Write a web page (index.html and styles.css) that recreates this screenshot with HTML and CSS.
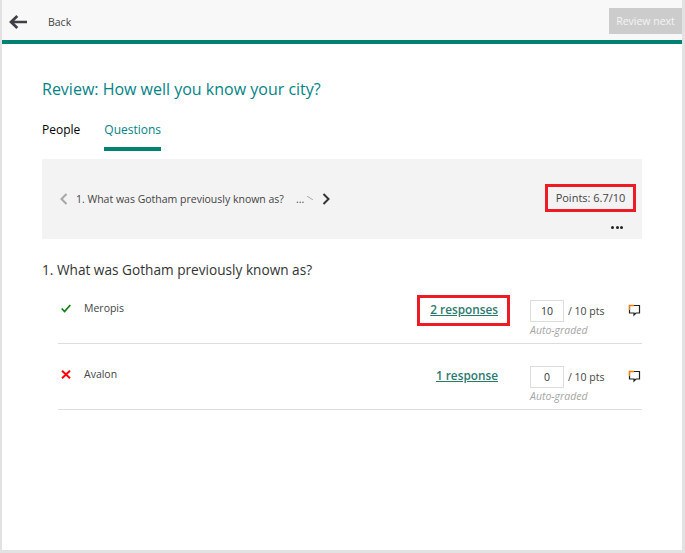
FILE: index.html
```html
<!DOCTYPE html>
<html lang="en">
<head>
<meta charset="utf-8">
<title>Review</title>
<link rel="stylesheet" href="styles.css">
</head>
<body>
<div class="page">
  <header class="topbar">
    <a class="back">
      <svg class="back-icon" viewBox="0 0 18 14" width="18" height="14"><path d="M18 7H2.500M8.300 1 2 7l6.300 6" fill="none" stroke="#3f3f46" stroke-width="2.700"/></svg>
      <span class="back-label">Back</span>
    </a>
    <button class="next">Review next</button>
  </header>
  <main class="content">
    <h1 class="title">Review: How well you know your city?</h1>
    <nav class="tabs">
      <span class="tab">People</span>
      <span class="tab active">Questions</span>
    </nav>
    <section class="panel">
      <div class="panel-row">
        <div class="pager">
          <svg class="chev" viewBox="0 0 9 12" width="9" height="12"><path d="M7.500 1 2.500 6l5 5" fill="none" stroke="#a6a6a6" stroke-width="2"/></svg>
          <span class="pager-text">1. What was Gotham previously known as?</span>
          <span class="pager-more">...</span>
          <svg class="tick" viewBox="0 0 6 4" width="6" height="4"><path d="M0 0 6 4" stroke="#a6a6a6" stroke-width="1"/></svg>
          <svg class="chev" viewBox="0 0 9 12" width="9" height="12"><path d="M1.500 1 6.500 6l-5 5" fill="none" stroke="#333" stroke-width="2"/></svg>
        </div>
        <div class="points">Points: 6.7/10</div>
      </div>
      <div class="dots"><i></i><i></i><i></i></div>
    </section>
    <h2 class="question">1. What was Gotham previously known as?</h2>
    <div class="answers">
      <div class="answer">
        <svg class="mark" viewBox="0 0 10 9" width="10" height="9"><path d="M.7 4.500 3.600 7.500 9.300 1" fill="none" stroke="#107c10" stroke-width="1.700"/></svg>
        <span class="option">Meropis</span>
        <a class="responses boxed">2 responses</a>
        <div class="score">
          <div class="score-line"><span class="score-box">10</span><span class="score-max">/ 10 pts</span></div>
          <div class="graded">Auto-graded</div>
        </div>
        <svg class="comment" viewBox="0 0 13 13" width="13" height="13"><path d="M1.500 1.500h10v7.500H8L6 11V9H1.500z" fill="none" stroke="#222" stroke-width="1.200"/><path d="M1.500 6V1.500H6" fill="none" stroke="#f57c00" stroke-width="1.300"/></svg>
      </div>
      <div class="answer">
        <svg class="mark" viewBox="0 0 10 9" width="10" height="9"><path d="M1 .7 9 8.300M9 .7 1 8.300" fill="none" stroke="#f00" stroke-width="1.900"/></svg>
        <span class="option">Avalon</span>
        <a class="responses">1 response</a>
        <div class="score">
          <div class="score-line"><span class="score-box">0</span><span class="score-max">/ 10 pts</span></div>
          <div class="graded">Auto-graded</div>
        </div>
        <svg class="comment" viewBox="0 0 13 13" width="13" height="13"><path d="M1.500 1.500h10v7.500H8L6 11V9H1.500z" fill="none" stroke="#222" stroke-width="1.200"/><path d="M1.500 6V1.500H6" fill="none" stroke="#f57c00" stroke-width="1.300"/></svg>
      </div>
    </div>
  </main>
</div>
</body>
</html>
```
FILE: styles.css
```css
* { box-sizing: border-box; }
html, body { margin: 0; height: 100%; }
body {
  background: #e2e2e2;
  font-family: "Open Sans", "Liberation Sans", sans-serif;
  color: #333;
  overflow: hidden;
}
.page {
  width: 680px;
  height: 550px;
  margin-left: 2px;
  background: #fff;
}
.topbar {
  height: 44px;
  background: #f8f8f8;
  border-bottom: 4px solid #008272;
  display: flex;
  align-items: flex-start;
  justify-content: space-between;
}
.back { display: flex; align-items: center; height: 40px; padding-left: 7px; padding-top: 3px; }
.back-label { font-size: 10.5px; margin-left: 21px; color: #444; }
.next {
  margin-top: 8px;
  width: 73px;
  height: 26px;
  border: 0;
  padding: 0;
  background: #ccc;
  color: #f4f4f4;
  font: 10.5px "Open Sans", sans-serif;
}
.content { padding: 0 40px; }
.title {
  margin: 33px 0 0;
  height: 25px;
  font-size: 16px;
  line-height: 25px;
  font-weight: 400;
  color: #038387;
}
.tabs { display: flex; gap: 24px; margin-top: 14px; height: 35px; }
.tab { font-size: 12px; line-height: 18px; padding-top: 5px; color: #000; height: 35px; }
.tab.active { color: #038387; border-bottom: 4px solid #008272; }
.panel { margin-top: 8px; height: 80px; background: #f3f3f3; padding: 0 6px 0 17px; position: relative; }
.panel-row { display: flex; justify-content: space-between; align-items: center; height: 79px; }
.pager { display: flex; align-items: center; font-size: 10.5px; color: #444; }
.pager-text { margin-left: 8px; }
.pager-more { margin-left: 12px; }
.tick { margin: -2px 0 0 3px; }
.pager .chev:last-child { margin-left: 9px; }
.points { border: 3px solid #ed1c24; width: 91px; height: 28px; font-size: 11px; line-height: 22px; text-align: center; color: #444; margin-top: -1px; }
.dots { position: absolute; right: 19px; top: 67px; display: flex; gap: 1.500px; }
.dots i { width: 3px; height: 3px; border-radius: 50%; background: #222; }
.question { margin: 24px 0 0; font-size: 13.650px; line-height: 14px; font-weight: 400; color: #333; }
.answers { margin: 1px 0 0 16px; }
.answer { height: 66px; border-bottom: 1px solid #ddd; position: relative; }
.mark { position: absolute; left: 3px; top: 26px; }
.option { position: absolute; left: 26px; top: 22px; font-size: 10.5px; line-height: 16px; color: #444; }
.responses { position: absolute; right: 144px; top: 22px; font-size: 11.800px; line-height: 18px; font-weight: 600; color: #2b7a6f; text-decoration: underline; }
.responses.boxed::after { content: ""; position: absolute; left: -13px; right: -12px; top: -5px; bottom: -8px; border: 3px solid #ed1c24; }
.score { position: absolute; left: 472px; top: 22px; }
.score-line { display: flex; align-items: center; }
.score-box { width: 34px; height: 22px; border: 1px solid #ddd; text-align: center; font-size: 10.5px; line-height: 20px; color: #333; }
.score-max { font-size: 10.5px; margin-left: 4px; color: #444; }
.graded { font-size: 10.500px; font-style: italic; color: #a6a6a6; line-height: 14px; margin-top: 1px; }
.comment { position: absolute; right: 1px; top: 26px; }
```
